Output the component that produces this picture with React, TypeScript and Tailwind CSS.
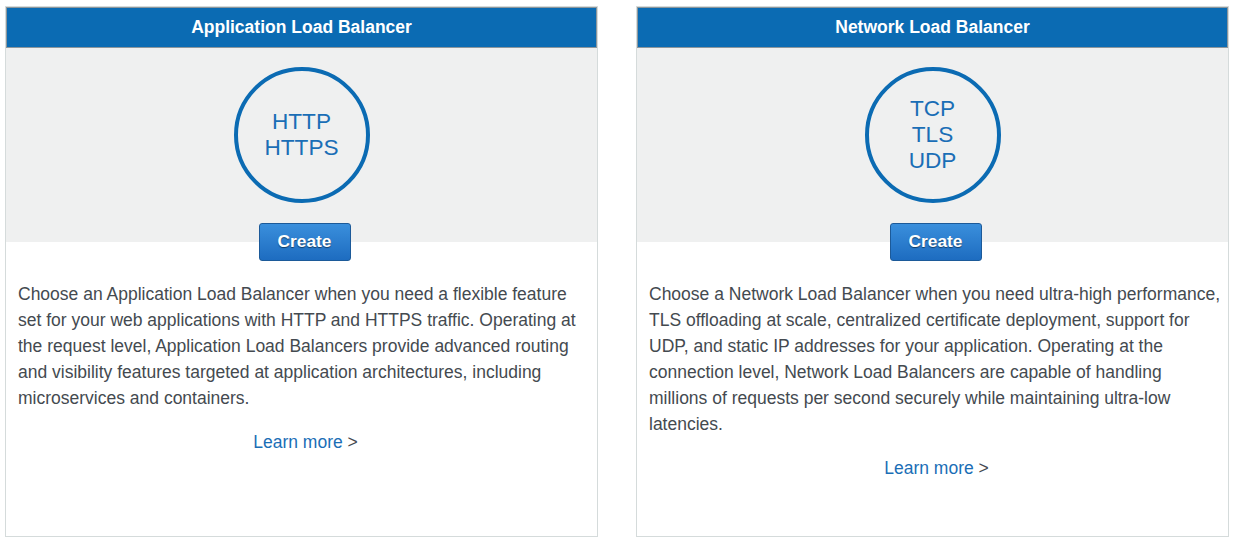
const cards = [
  {
    title: 'Application Load Balancer',
    protocols: ['HTTP', 'HTTPS'],
    text: 'Choose an Application Load Balancer when you need a flexible feature set for your web applications with HTTP and HTTPS traffic. Operating at the request level, Application Load Balancers provide advanced routing and visibility features targeted at application architectures, including microservices and containers.',
  },
  {
    title: 'Network Load Balancer',
    protocols: ['TCP', 'TLS', 'UDP'],
    text: 'Choose a Network Load Balancer when you need ultra-high performance, TLS offloading at scale, centralized certificate deployment, support for UDP, and static IP addresses for your application. Operating at the connection level, Network Load Balancers are capable of handling millions of requests per second securely while maintaining ultra-low latencies.',
  },
]

function Card({ title, protocols, text }: (typeof cards)[number]) {
  return (
    <div className="w-[593px] h-[531px] border border-[#d5dbdb] bg-white flex flex-col">
      <div className="h-[41px] bg-[#0b6bb3] border border-[#8c969c] flex items-center justify-center">
        <h2 className="text-white font-bold text-[17.5px]">{title}</h2>
      </div>
      <div className="relative h-[194px] bg-[#eff0f0] flex justify-center pt-[19px]">
        <div className="w-[136px] h-[136px] rounded-full border-4 border-[#0b6bb3] flex flex-col items-center justify-center text-[#1a6eb6] text-[22.6px] leading-[26px]">
          {protocols.map((p) => (
            <span key={p}>{p}</span>
          ))}
        </div>
        <button className="absolute left-[calc(50%+3px)] -translate-x-1/2 top-[175px] w-[92px] h-[38px] rounded-[3px] border border-[#1c5a99] bg-gradient-to-b from-[#3a8fdc] to-[#1d6cc0] text-white font-bold text-[17.3px] [text-shadow:0_1px_1px_rgba(0,0,0,0.5)]">
          Create
        </button>
      </div>
      <div className="pl-3 pr-1 pt-[39px]">
        <p className="text-[#444a50] text-[17.5px] leading-[26px]">{text}</p>
        <p className="mt-[18px] text-center text-[17.5px] leading-[26px]">
          <a className="text-[#1a6eb6]">Learn more</a>
          <span className="text-[#444a50]"> &gt;</span>
        </p>
      </div>
    </div>
  )
}

export default function App() {
  return (
    <div className="w-[1238px] h-[546px] bg-white pl-[5px] pt-[6px] flex gap-[38px] font-['Liberation_Sans',Arial,sans-serif]">
      {cards.map((c) => (
        <Card key={c.title} {...c} />
      ))}
    </div>
  )
}
